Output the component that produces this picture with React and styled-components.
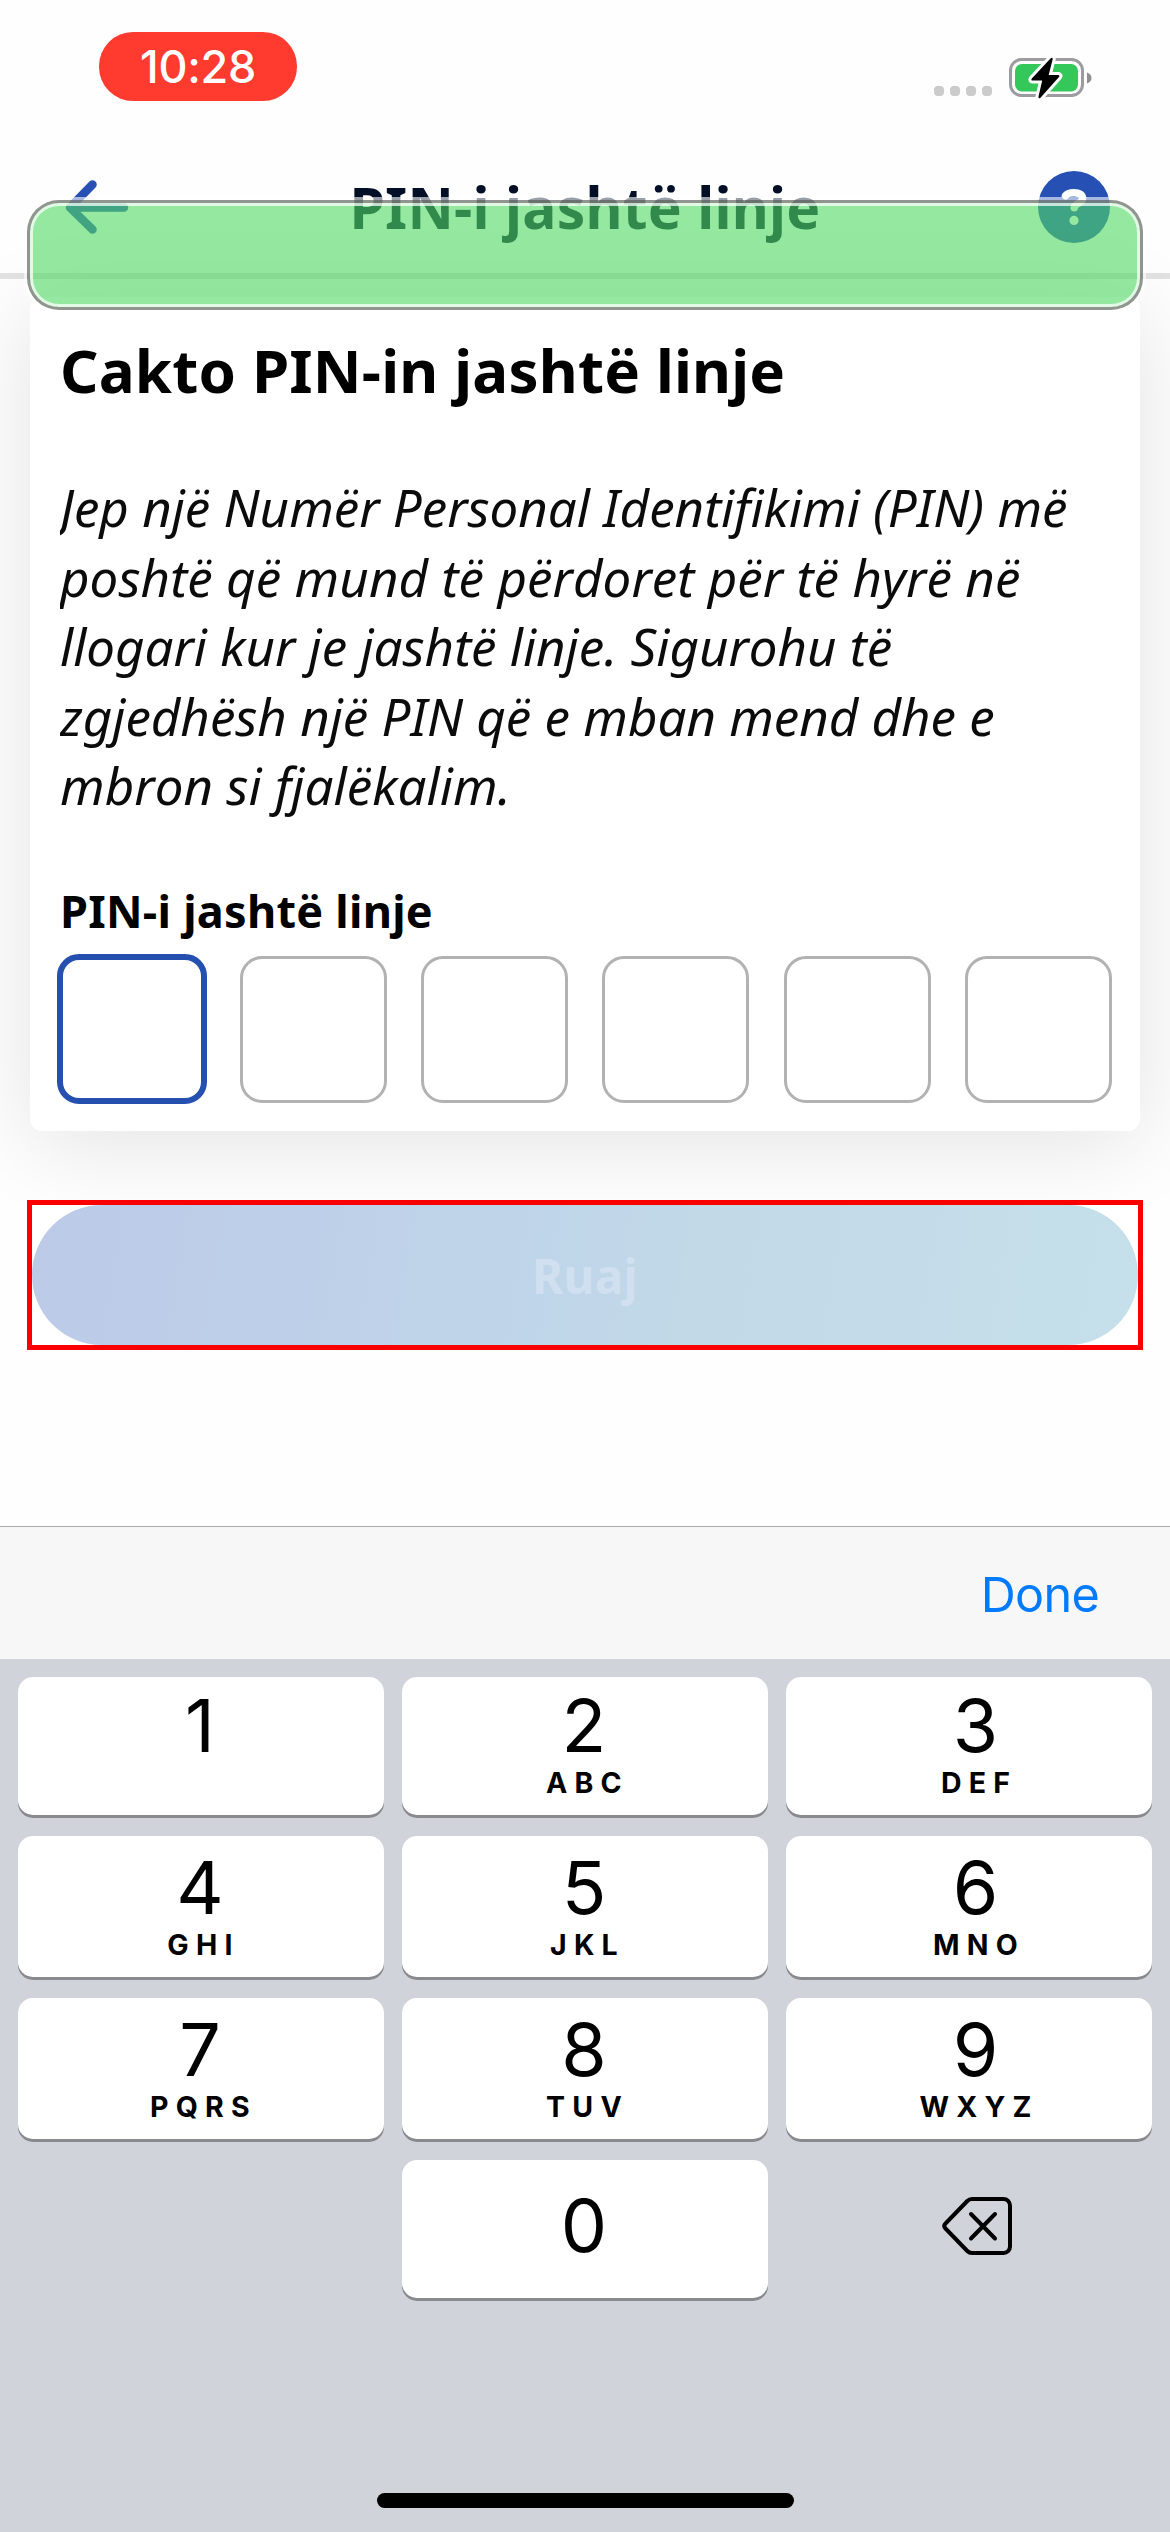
import React from "react";
import styled, { createGlobalStyle } from "styled-components";

const GlobalStyle = createGlobalStyle`
  *, *::before, *::after { box-sizing: border-box; }
  html, body { margin: 0; padding: 0; background: #fff; }
  body { overflow: hidden; }
  button { border: 0; background: none; padding: 0; margin: 0; font: inherit; color: inherit; }
  h1, h2, p { margin: 0; }
`;

const appFont = `"Noto Sans", sans-serif`;
const systemFont = `Inter, "Liberation Sans", sans-serif`;

const Screen = styled.div`
  position: relative;
  display: flex;
  flex-direction: column;
  width: 1170px;
  height: 2532px;
  overflow: hidden;
  background: #fefefe;
  color: #000;
  font-family: ${appFont};
`;

const StatusBar = styled.div`
  display: flex;
  justify-content: space-between;
  align-items: flex-start;
  flex: none;
  height: 141px;
  padding: 32px 78px 0 99px;
  font-family: ${systemFont};
`;

const TimePill = styled.div`
  display: flex;
  align-items: center;
  justify-content: center;
  width: 198px;
  height: 69px;
  border-radius: 34px;
  background: #ff3b30;
  color: #fff;
  font-size: 45px;
  font-weight: 500;
  letter-spacing: -0.3px;
  line-height: 70px;
`;

const StatusIcons = styled.div`
  display: flex;
  align-items: flex-end;
  gap: 17px;
  padding-top: 24px;
`;

const SignalDots = styled.div`
  display: flex;
  gap: 6px;
  padding-bottom: 4px;
`;

const Dot = styled.span`
  width: 10px;
  height: 10px;
  border-radius: 4px;
  background: #cbcbcb;
`;

const Header = styled.header`
  display: flex;
  align-items: center;
  justify-content: space-between;
  flex: none;
  height: 138px;
  padding: 0 60px;
  border-bottom: 6px solid #e2e2e2;
`;

const IconButton = styled.button`
  display: flex;
  width: 72px;
  height: 72px;
`;

const Title = styled.h1`
  color: #000f26;
  font-size: 57px;
  font-weight: 700;
  letter-spacing: 0.26px;
  line-height: 78px;
  white-space: nowrap;
`;

const FocusRing = styled.div`
  position: absolute;
  z-index: 2;
  top: 200px;
  left: 27px;
  width: 1116px;
  height: 110px;
  border: 3px solid rgba(125, 130, 125, 0.85);
  border-radius: 32px;
  background: rgba(80, 217, 99, 0.61);
  background-clip: padding-box;
  box-shadow: 0 0 0 3px rgba(255, 255, 255, 0.6), inset 0 0 0 3px rgba(255, 255, 255, 0.72);
`;

const Content = styled.main`
  display: flex;
  flex-direction: column;
  flex: none;
  height: 1247px;
  padding: 18px 27px 0;
`;

const Card = styled.section`
  height: 834px;
  margin: 0 3px;
  padding: 32px 28px 0 30px;
  border-radius: 12px;
  background: #fff;
  box-shadow: 0 12px 90px rgba(0, 0, 0, 0.11);
`;

const Heading = styled.h2`
  font-size: 60px;
  font-weight: 700;
  letter-spacing: 0.18px;
  line-height: 82px;
  white-space: nowrap;
`;

const Description = styled.p`
  margin-top: 62px;
  overflow: hidden;
  color: #0b0b0b;
  font-size: 51px;
  font-kerning: none;
  font-style: italic;
  line-height: 69.5px;
  white-space: nowrap;
`;

const Line = styled.span`
  display: block;
  letter-spacing: ${(p) => p.$tracking || 0}px;
`;

const Label = styled.label`
  display: block;
  margin-top: 59px;
  font-size: 45px;
  font-weight: 700;
  letter-spacing: 0.26px;
  line-height: 62px;
  white-space: nowrap;
`;

const PinRow = styled.div`
  display: flex;
  align-items: center;
  justify-content: space-between;
  height: 150px;
  margin: 12.5px 0 0 -1.5px;
`;

const PinCell = styled.div`
  width: ${(p) => (p.$active ? 150 : 147)}px;
  height: ${(p) => (p.$active ? 150 : 147)}px;
  margin: 0 ${(p) => (p.$active ? -1.5 : 0)}px;
  border: ${(p) => (p.$active ? "6px solid #2650b0" : "3px solid #b2b2b2")};
  border-radius: 22px;
`;

const SaveOutline = styled.div`
  height: 150px;
  margin-top: 69px;
  border: 5px solid #fa0000;
  background: #fff;
`;

const SaveButton = styled.button`
  width: 100%;
  height: 100%;
  border-radius: 70px;
  background: linear-gradient(100deg, #bccae8 0%, #bfd4e9 42%, #c2d9e8 60%, #c5e0ea 100%);
  color: #d0e0f0;
  font-size: 47.5px;
  font-weight: 700;
  letter-spacing: 0.4px;
  line-height: 137px;
`;

const KeyboardToolbar = styled.div`
  display: flex;
  align-items: center;
  justify-content: flex-end;
  flex: none;
  height: 133px;
  padding: 3px 71px 0;
  border-top: 1px solid #adadad;
  background: #f7f7f7;
`;

const DoneButton = styled.button`
  color: #007aff;
  font-family: ${systemFont};
  font-size: 48.5px;
  font-weight: 400;
  letter-spacing: -0.7px;
  line-height: 60px;
`;

const Keyboard = styled.div`
  display: flex;
  flex-direction: column;
  justify-content: space-between;
  align-items: center;
  flex: 1;
  padding: 18px 18px 24px;
  background: #d0d3d9;
  font-family: ${systemFont};
`;

const KeyGrid = styled.div`
  display: grid;
  grid-template-columns: repeat(3, 366px);
  grid-template-rows: 138px 141px 141px 138px;
  gap: 21px 18px;
`;

const Key = styled.button`
  display: flex;
  flex-direction: column;
  align-items: center;
  justify-content: ${(p) => (p.$single ? "center" : "flex-end")};
  padding-bottom: ${(p) => (p.$single ? 6 : 17)}px;
  padding-left: ${(p) => (p.$last ? 15 : 0)}px;
  border-radius: 15px;
  background: ${(p) => (p.$bare ? "transparent" : "#fff")};
  box-shadow: ${(p) => (p.$bare ? "none" : "0 3px 0 #898a8d")};
`;

const Digit = styled.span`
  height: 72px;
  margin-right: 2px;
  font-size: 73.5px;
  font-weight: 400;
  line-height: 72px;
`;

const Letters = styled.span`
  height: 30px;
  margin-top: 6px;
  padding-left: 5px;
  font-size: 28.5px;
  font-weight: 650;
  letter-spacing: 7.2px;
  line-height: 30px;
`;

const HomeIndicator = styled.div`
  width: 417px;
  height: 15px;
  border-radius: 8px;
  background: #000;
`;

const BatteryIcon = () => (
  <svg width="83" height="44" viewBox="0 0 83 44">
    <rect x="1.5" y="3.5" width="72" height="36" rx="11" fill="none" stroke="#9d9b9f" strokeWidth="3" />
    <path d="M78 16.5c3 1 4.500 3 4.500 5.500s-1.500 4.500-4.500 5.500z" fill="#8f8f8f" />
    <rect x="6" y="8" width="63" height="27.500" rx="7" fill="#34c759" />
    <path
      d="M41.500 2.500 22.800 22.500c-.8 1-.4 2.100.8 2.100h9.600L29.500 40.500c-.4 1.700 1 2.400 2.200.9L50 21c.9-1 .4-2.100-.9-2.100H39.700l3.900-15.300c.4-1.700-1-2.300-2.100-1.100z"
      fill="#000"
      stroke="#fff"
      strokeWidth="6"
      strokeLinejoin="round"
      paintOrder="stroke"
    />
  </svg>
);

const BackIcon = () => (
  <svg width="72" height="72" viewBox="0 0 72 72" fill="none" stroke="#2850b2" strokeWidth="8.500" strokeLinecap="round" strokeLinejoin="round">
    <path d="M32.500 13.500 10 36.500 32.500 58.500M10 36.500h54" />
  </svg>
);

const HelpIcon = () => (
  <svg width="72" height="72" viewBox="0 0 72 72">
    <circle cx="36" cy="36" r="36" fill="#2650b4" />
    <path d="M27.500 24.800c1.400-2.200 4-3 8.500-3 5.300 0 8.600 2 8.600 5.700 0 5-8.400 5-8.400 9.300" fill="none" stroke="#fff" strokeWidth="7.500" strokeLinecap="round" />
    <circle cx="36" cy="49.400" r="4.600" fill="#fff" />
  </svg>
);

const DeleteIcon = () => (
  <svg width="70" height="60" viewBox="0 0 70 60" fill="none" stroke="#000" strokeLinecap="round" strokeLinejoin="round">
    <path strokeWidth="4" d="M30 3h31.500a6.500 6.500 0 0 1 6.500 6.500v41a6.500 6.500 0 0 1-6.500 6.500H30q-2.700 0-4.700-2L3.500 32.500q-2.500-2.500 0-5L25.300 5Q27.300 3 30 3z" />
    <path strokeWidth="4" d="M29 18l24 24.500M53 18L29 42.500" />
  </svg>
);

const keys = [
  ["1", ""],
  ["2", "ABC"],
  ["3", "DEF"],
  ["4", "GHI"],
  ["5", "JKL"],
  ["6", "MNO"],
  ["7", "PQRS"],
  ["8", "TUV"],
  ["9", "WXYZ"],
];

export default function App() {
  return (
    <Screen>
      <GlobalStyle />
      <StatusBar>
        <TimePill>10:28</TimePill>
        <StatusIcons>
          <SignalDots>
            <Dot />
            <Dot />
            <Dot />
            <Dot />
          </SignalDots>
          <BatteryIcon />
        </StatusIcons>
      </StatusBar>
      <Header>
        <IconButton>
          <BackIcon />
        </IconButton>
        <Title>PIN-i jashtë linje</Title>
        <IconButton>
          <HelpIcon />
        </IconButton>
      </Header>
      <FocusRing />
      <Content>
        <Card>
          <Heading>Cakto PIN-in jashtë linje</Heading>
          <Description>
            <Line>Jep një Numër Personal Identifikimi (PIN) më</Line>
            <Line $tracking={0.09}>poshtë që mund të përdoret për të hyrë në</Line>
            <Line>llogari kur je jashtë linje. Sigurohu të</Line>
            <Line>zgjedhësh një PIN që e mban mend dhe e</Line>
            <Line $tracking={0.06}>mbron si fjalëkalim.</Line>
          </Description>
          <Label>PIN-i jashtë linje</Label>
          <PinRow>
            {[0, 1, 2, 3, 4, 5].map((i) => (
              <PinCell key={i} $active={i === 0} />
            ))}
          </PinRow>
        </Card>
        <SaveOutline>
          <SaveButton disabled>Ruaj</SaveButton>
        </SaveOutline>
      </Content>
      <KeyboardToolbar>
        <DoneButton>Done</DoneButton>
      </KeyboardToolbar>
      <Keyboard>
        <KeyGrid>
          {keys.map(([digit, letters], i) => (
            <Key key={digit} $last={i % 3 === 2}>
              <Digit>{digit}</Digit>
              <Letters>{letters}</Letters>
            </Key>
          ))}
          <span />
          <Key $single>
            <Digit>0</Digit>
          </Key>
          <Key $single $bare $last>
            <DeleteIcon />
          </Key>
        </KeyGrid>
        <HomeIndicator />
      </Keyboard>
    </Screen>
  );
}
